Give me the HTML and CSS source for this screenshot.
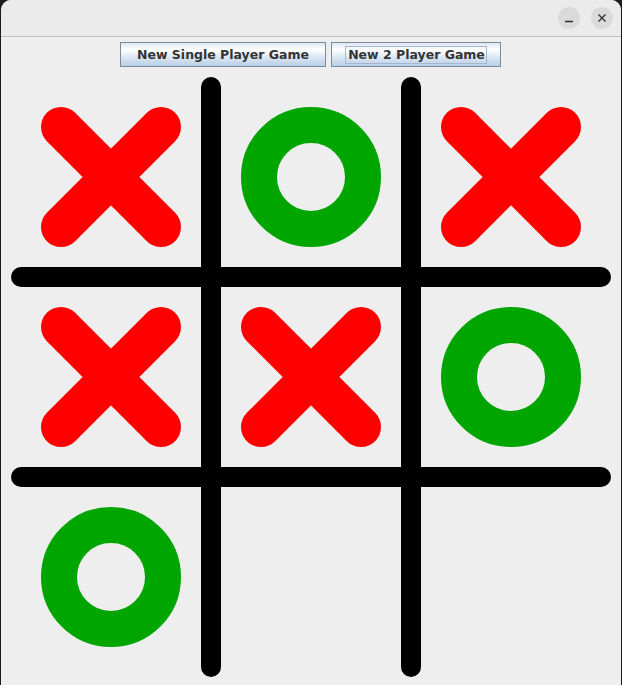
FILE: index.html
```html
<!DOCTYPE html>
<html>
<head>
<meta charset="utf-8">
<link rel="stylesheet" href="styles.css">
</head>
<body>
<div class="window">
  <div class="titlebar">
    <div class="controls">
      <span class="ctl"><svg width="22" height="22" viewBox="0 0 22 22"><line x1="7" y1="14.5" x2="15" y2="14.5" stroke="#2e2e2e" stroke-width="1.3"/></svg></span>
      <span class="ctl"><svg width="22" height="22" viewBox="0 0 22 22"><path d="M7.5 7.5 L14.5 14.5 M14.5 7.5 L7.5 14.5" stroke="#2e2e2e" stroke-width="1.3" fill="none"/></svg></span>
    </div>
  </div>
  <div class="toolbar">
    <button class="btn btn-single">New Single Player Game</button>
    <button class="btn btn-two"><span class="focus">New 2 Player Game</span></button>
  </div>
  <div class="board">
    <svg width="600" height="600" viewBox="0 0 600 600">
      <g stroke="#000" stroke-width="20" stroke-linecap="round">
        <line x1="200" y1="10" x2="200" y2="590"/>
        <line x1="400" y1="10" x2="400" y2="590"/>
        <line x1="10" y1="200" x2="590" y2="200"/>
        <line x1="10" y1="400" x2="590" y2="400"/>
      </g>
      <g stroke="#ff0000" stroke-width="40" stroke-linecap="round">
        <path d="M50 50 L150 150 M150 50 L50 150"/>
        <path d="M450 50 L550 150 M550 50 L450 150"/>
        <path d="M50 250 L150 350 M150 250 L50 350"/>
        <path d="M250 250 L350 350 M350 250 L250 350"/>
      </g>
      <g stroke="#00a500" stroke-width="36" fill="none">
        <circle cx="300" cy="100" r="52"/>
        <circle cx="500" cy="300" r="52"/>
        <circle cx="100" cy="500" r="52"/>
      </g>
    </svg>
  </div>
</div>
</body>
</html>
```

FILE: styles.css
```css
html, body {
  margin: 0;
  padding: 0;
  background: #1c1c1c;
}
body {
  width: 622px;
  height: 685px;
  overflow: hidden;
}
.window {
  margin-left: 1px;
  width: 620px;
  height: 685px;
  background: #eeeeee;
  border-radius: 10px 10px 0 0;
  overflow: hidden;
}
.titlebar {
  height: 36px;
  background: #ebebeb;
  border-bottom: 1px solid #c2c2c2;
  display: flex;
  justify-content: flex-end;
  align-items: center;
}
.controls {
  display: flex;
  gap: 11px;
  margin-right: 8px;
}
.ctl {
  width: 22px;
  height: 22px;
  border-radius: 50%;
  background: #dadada;
  display: flex;
}
.toolbar {
  display: flex;
  justify-content: center;
  gap: 5px;
  padding-top: 5px;
  padding-right: 1px;
  height: 25px;
}
.btn {
  box-sizing: border-box;
  height: 25px;
  margin: 0;
  padding: 0;
  border: 1px solid #7a8a99;
  background: linear-gradient(to bottom, #dde8f3 0%, #ffffff 30%, #dde8f3 60%, #b8cfe5 100%);
  font-family: "DejaVu Sans", sans-serif;
  font-weight: bold;
  font-size: 12.5px;
  color: #333333;
  display: flex;
  align-items: center;
  justify-content: center;
}
.btn-single {
  width: 206px;
}
.btn-two {
  width: 170px;
}
.focus {
  border: 1px solid #a3b8cc;
  padding: 1px 1px 1px 2px;
  line-height: 14px;
}
.board {
  margin-top: 10px;
  margin-left: 10px;
  width: 600px;
  height: 600px;
}
.board svg {
  display: block;
}
```
